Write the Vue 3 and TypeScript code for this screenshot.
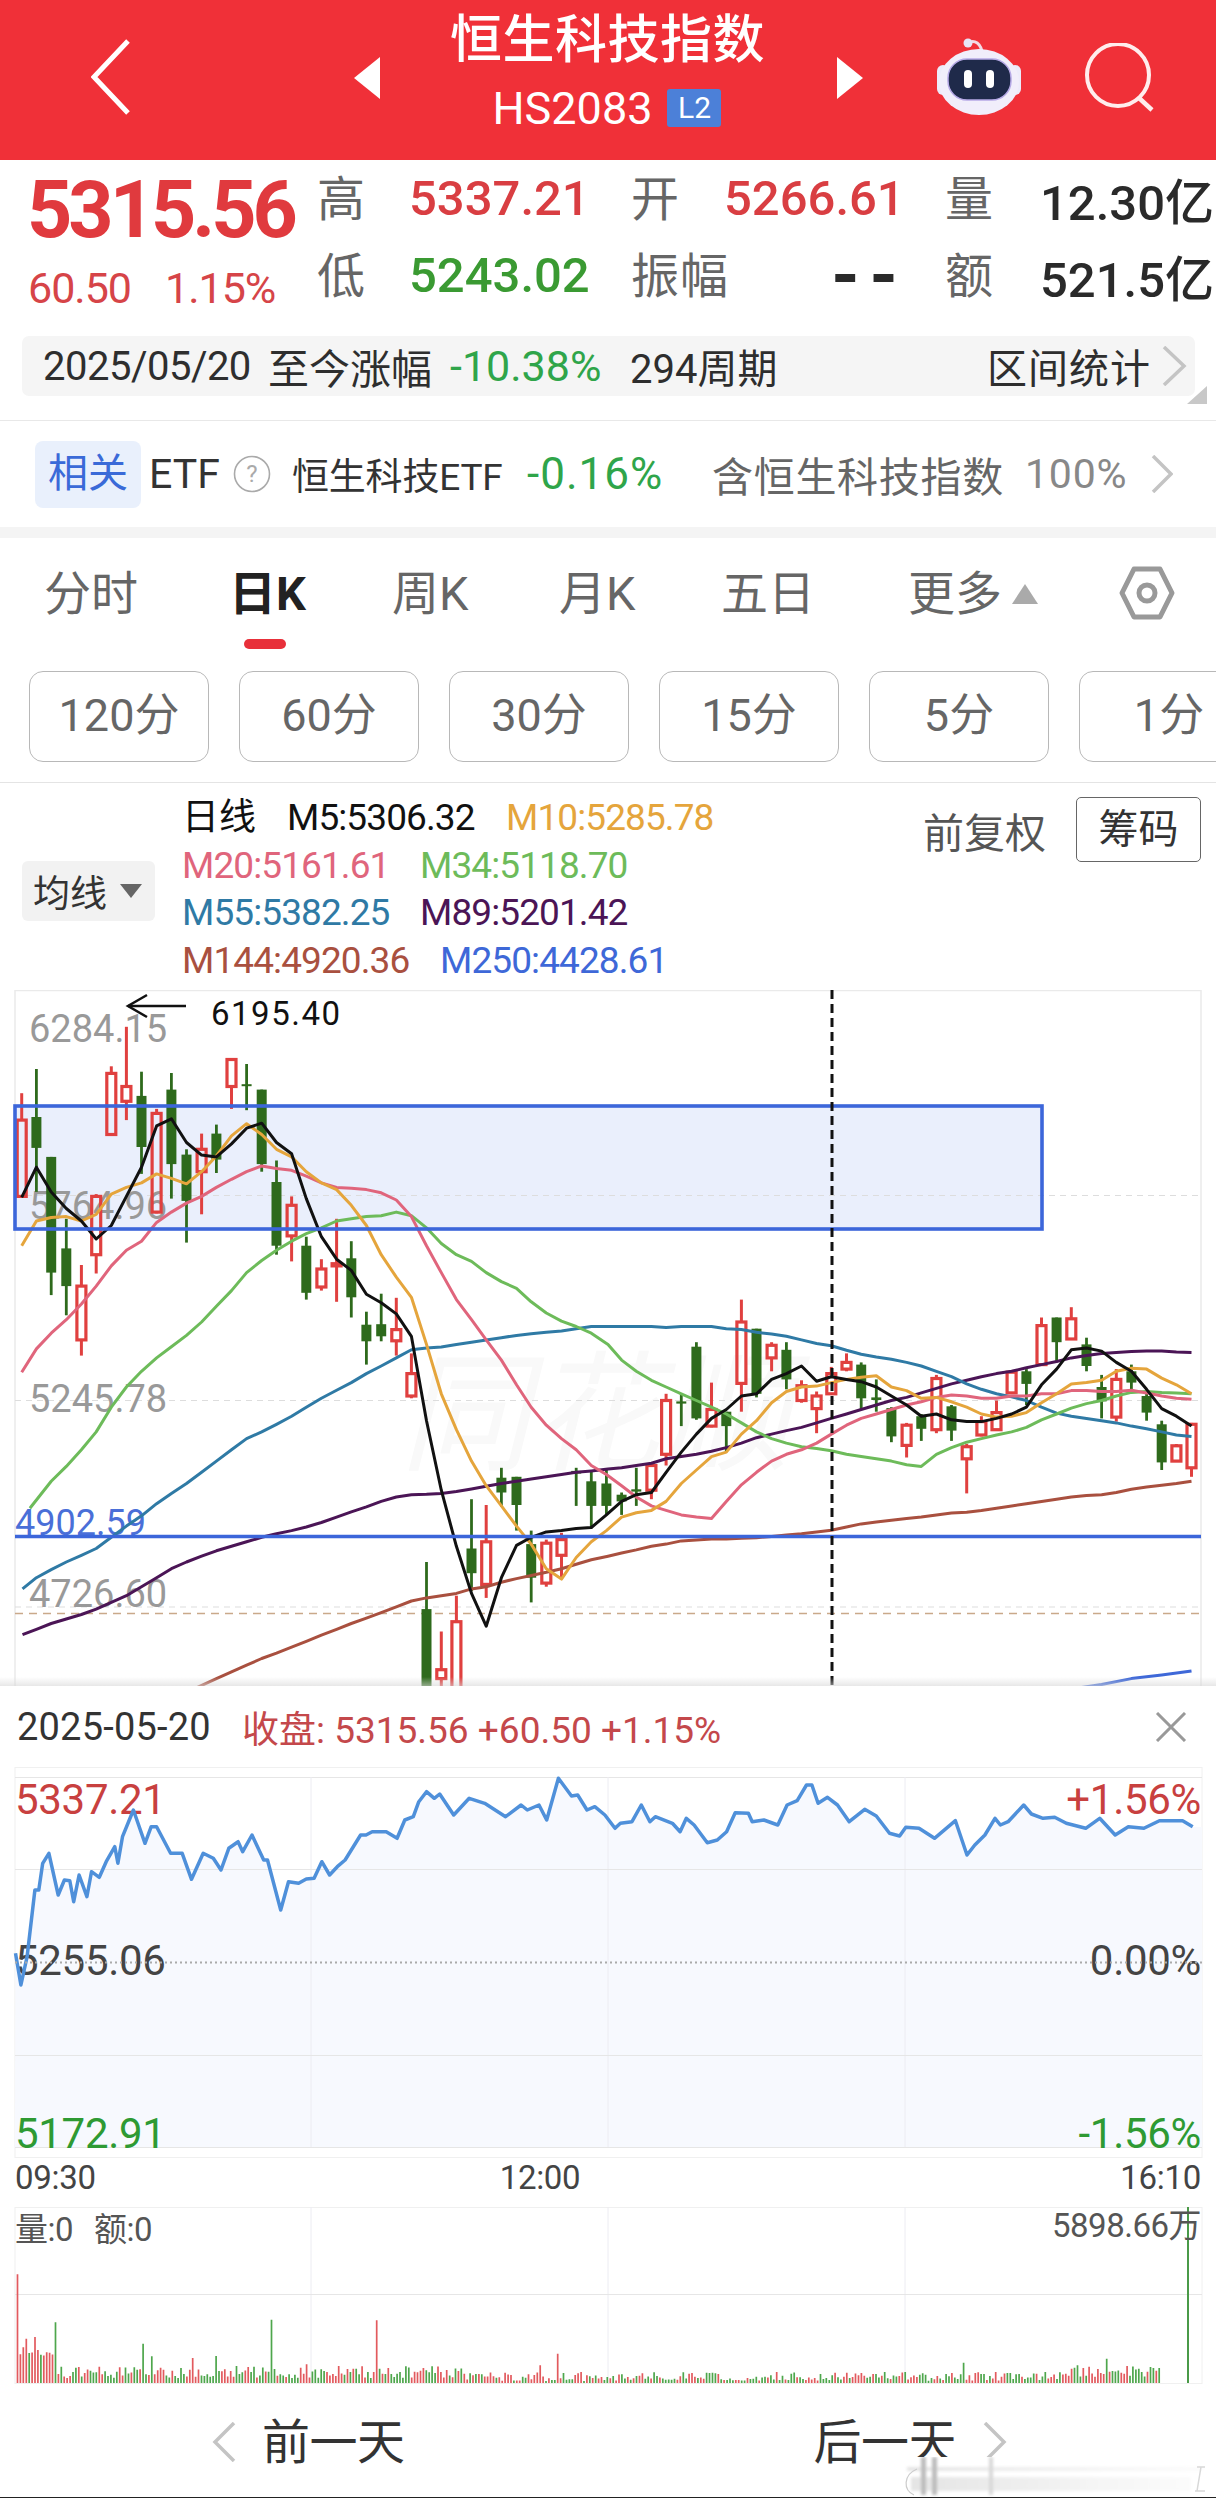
<script setup lang="ts">
type Candle = [number, number, number, number, number, 'r' | 'g']
const XR = 2.579
const YR = 2.229

const left: Candle[] = [
  [56,230,290,460,460,'r'],[94,176,283,352,450,'g'],[132,372,372,630,680,'g'],[171,510,576,660,725,'g'],
  [210,613,660,780,815,'r'],[248,455,460,590,632,'r'],[287,170,186,322,322,'r'],[326,82,215,248,290,'r'],
  [365,182,236,350,410,'g'],[404,265,275,495,498,'r'],[442,185,222,388,465,'g'],[481,355,367,470,563,'g'],
  [520,320,355,405,500,'r'],[558,300,320,378,408,'g'],[597,155,155,215,265,'r'],[636,165,210,214,268,'g'],
  [675,222,222,388,405,'g'],[713,380,428,570,590,'g'],[752,460,480,548,605,'r'],[790,550,570,675,690,'g'],
  [829,600,622,662,670,'r'],[868,510,610,615,695,'r'],[906,560,598,685,730,'g'],[945,717,746,783,835,'g'],
  [983,677,745,772,783,'g'],[1022,686,757,782,815,'r'],[1061,810,855,905,910,'r'],[1100,1275,1380,1600,1600,'g'],
  [1138,1430,1515,1535,1600,'r'],[1177,1350,1408,1600,1600,'r'],[1216,1135,1245,1300,1340,'g'],
  [1254,1148,1230,1325,1355,'r'],[1293,1065,1087,1120,1152,'g'],[1332,1085,1085,1148,1205,'g'],
  [1370,1205,1235,1310,1365,'g'],[1409,1225,1233,1322,1330,'r'],[1448,1210,1225,1260,1310,'r'],
  [1486,1065,1072,1078,1150,'g'],[1525,1070,1095,1150,1200,'g'],[1564,1070,1100,1150,1170,'g'],
]
const right: Candle[] = [
  [35,1120,1125,1140,1170,'g'],[73,1065,1113,1118,1150,'g'],[112,1055,1060,1115,1135,'r'],[150,900,915,1035,1060,'r'],
  [189,900,917,922,972,'g'],[228,785,795,955,958,'g'],[267,875,935,972,975,'r'],[305,940,940,972,1030,'g'],
  [344,690,740,877,940,'r'],[383,755,755,900,908,'g'],[422,785,792,820,850,'r'],[460,785,802,868,890,'g'],
  [499,870,882,915,920,'r'],[538,895,905,933,988,'r'],[576,840,855,900,900,'r'],[615,810,830,845,850,'r'],
  [653,830,835,910,935,'g'],[692,868,908,914,940,'g'],[731,930,932,995,1008,'g'],[770,965,970,1015,1042,'r'],
  [808,945,950,978,1005,'g'],[847,858,866,980,988,'r'],[886,925,928,982,1005,'g'],[925,1012,1018,1045,1122,'r'],
  [963,950,962,992,995,'r'],[1002,915,942,980,982,'r'],[1041,850,852,898,900,'r'],[1079,845,850,878,925,'g'],
  [1118,730,748,835,835,'r'],[1157,730,730,785,830,'g'],[1195,707,733,778,780,'r'],[1234,775,790,838,850,'g'],
  [1273,858,885,917,955,'g'],[1311,845,868,952,962,'r'],[1350,835,850,875,895,'g'],[1389,895,905,942,960,'g'],
  [1428,960,968,1053,1070,'g'],[1466,1012,1016,1050,1052,'r'],[1505,965,968,1065,1085,'r'],
]
const round = (n: number) => Math.round(n * 10) / 10
const candles = [...left, ...right.map((c) => [c[0] + 1568, c[1], c[2], c[3], c[4], c[5]] as Candle)].map((c) => ({
  x: round(c[0] / XR), hi: round(c[1] / YR), top: round(c[2] / YR), bot: round(c[3] / YR), lo: round(c[4] / YR), red: c[5] === 'r',
}))

function line(a: number[], b: number[] = []): string {
  const out: string[] = []
  for (let i = 0; i < a.length; i += 2) out.push(`${round(a[i] / XR)},${round(a[i + 1] / YR)}`)
  for (let i = 0; i < b.length; i += 2) out.push(`${round((b[i] + 1568) / XR)},${round(b[i + 1] / YR)}`)
  return out.join(' ')
}

const maLines = [
  { cls: 'ma144', pts: line(
    [500,1558,558,1535,597,1520,636,1505,675,1490,713,1478,752,1465,790,1452,829,1438,868,1425,906,1412,945,1400,983,1388,1022,1375,1061,1362,1100,1355,1138,1350,1177,1345,1216,1335,1254,1330,1293,1320,1332,1312,1370,1305,1409,1298,1448,1290,1486,1280,1525,1270],
    [0,1262,35,1255,73,1248,112,1240,150,1235,189,1228,228,1226,267,1224,305,1224,344,1222,383,1221,422,1218,460,1215,499,1212,538,1208,576,1204,615,1197,653,1190,692,1186,731,1182,770,1178,808,1175,847,1170,886,1166,925,1164,963,1160,1002,1155,1041,1150,1079,1145,1118,1140,1157,1135,1195,1130,1234,1127,1273,1125,1311,1120,1350,1113,1389,1108,1428,1104,1466,1100,1505,1095]) },
  { cls: 'ma250', pts: line([], [1195,1558,1273,1548,1350,1535,1428,1527,1505,1518]) },
  { cls: 'ma89', pts: line(
    [58,1437,94,1425,132,1412,171,1402,210,1392,248,1380,287,1365,326,1350,365,1330,404,1310,442,1290,481,1275,520,1262,558,1250,597,1240,636,1230,675,1220,713,1212,752,1205,790,1197,829,1187,868,1175,906,1163,945,1152,983,1140,1022,1130,1061,1125,1100,1124,1138,1122,1177,1118,1216,1112,1254,1106,1293,1100,1332,1095,1370,1090,1409,1085,1448,1080,1486,1075,1525,1072],
    [0,1068,35,1065,73,1060,112,1055,150,1045,189,1040,228,1035,267,1028,305,1020,344,1010,383,998,422,990,460,982,499,975,538,965,576,955,615,945,653,935,692,925,731,915,770,908,808,898,847,888,886,878,925,870,963,862,1002,855,1041,850,1079,842,1118,835,1157,828,1195,820,1234,815,1273,810,1311,808,1350,806,1389,805,1428,805,1466,807,1505,808]) },
  { cls: 'ma55', pts: line(
    [58,1335,94,1310,132,1292,171,1275,210,1260,248,1245,287,1220,326,1195,365,1172,404,1145,442,1122,481,1100,520,1075,558,1050,597,1025,636,1000,675,985,713,968,752,950,790,930,829,910,868,892,906,875,945,855,983,838,1022,820,1061,802,1100,798,1138,796,1177,790,1216,785,1254,780,1293,775,1332,770,1370,766,1409,763,1448,760,1486,755,1525,750],
    [0,750,35,750,73,750,112,750,150,752,189,750,228,750,267,750,305,755,344,757,383,763,422,767,460,772,499,780,538,788,576,793,615,803,653,812,692,818,731,823,770,830,808,838,847,850,886,862,925,878,963,890,1002,900,1041,907,1079,915,1118,930,1157,943,1195,950,1234,955,1273,960,1311,965,1350,972,1389,978,1428,985,1466,992,1505,995]) },
  { cls: 'ma34', pts: line(
    [77,1155,132,1095,171,1062,210,1025,248,985,287,930,326,885,365,850,404,820,442,795,481,770,520,740,558,705,597,670,636,630,675,603,713,580,752,560,790,543,829,530,868,515,906,510,945,505,983,503,1022,495,1061,503,1100,530,1138,565,1177,590,1216,605,1254,630,1293,650,1332,665,1370,695,1409,720,1448,738,1486,750,1525,765],
    [0,790,35,825,73,850,112,870,150,885,189,900,228,915,267,930,305,945,344,965,383,985,422,1000,460,1010,499,1018,538,1022,576,1027,615,1035,653,1040,692,1045,731,1050,770,1058,808,1062,847,1035,886,1020,925,1008,963,1000,1002,992,1041,985,1079,975,1118,958,1157,945,1195,932,1234,922,1273,915,1311,905,1350,897,1389,895,1428,897,1466,898,1505,900]) },
  { cls: 'ma20', pts: line(
    [56,852,94,800,132,765,171,735,210,700,248,660,287,615,326,580,365,560,404,518,442,495,481,475,520,460,558,440,597,422,636,405,675,392,713,398,752,402,790,415,829,430,868,440,906,442,945,445,983,452,1022,468,1061,505,1100,570,1138,630,1177,690,1216,735,1254,780,1293,825,1332,880,1370,930,1409,970,1448,1000,1486,1025,1525,1060,1564,1080],
    [35,1105,73,1130,112,1150,150,1160,189,1170,228,1175,267,1178,305,1140,344,1103,383,1075,422,1050,460,1035,499,1025,538,1010,576,990,615,970,653,955,692,945,731,935,770,925,808,918,847,908,886,903,925,905,963,910,1002,910,1041,905,1079,905,1118,900,1157,900,1195,893,1234,893,1273,895,1311,895,1350,892,1389,898,1428,905,1466,910,1505,912]) },
  { cls: 'ma10', pts: line(
    [56,570,94,515,132,507,171,505,210,515,248,500,287,455,326,440,365,430,404,410,442,420,481,432,520,405,558,370,597,325,636,298,675,322,713,355,752,372,790,405,829,430,868,445,906,480,945,525,983,590,1022,640,1061,685,1100,790,1138,900,1177,980,1216,1050,1254,1105,1293,1150,1332,1195,1370,1235,1409,1290,1448,1313,1486,1265,1525,1230,1564,1205],
    [35,1175,73,1165,112,1160,150,1140,189,1100,228,1070,267,1040,305,1030,344,990,383,960,422,920,460,895,499,885,538,883,576,875,615,868,653,863,692,860,731,885,770,893,808,910,847,908,886,918,925,930,963,945,1002,952,1041,950,1079,942,1118,920,1157,900,1195,878,1234,875,1273,870,1311,850,1350,843,1389,845,1428,865,1466,880,1505,900]) },
  { cls: 'ma5', pts: line(
    [56,462,94,395,132,450,171,487,210,515,248,555,287,525,326,460,365,395,404,303,442,287,481,340,520,368,558,372,597,343,636,308,675,297,713,340,752,365,790,465,829,550,868,600,906,625,945,678,983,697,1022,722,1061,772,1100,960,1138,1115,1177,1240,1216,1345,1254,1418,1293,1310,1332,1238,1370,1220,1409,1208,1448,1205,1486,1200,1525,1198,1564,1170],
    [35,1140,73,1125,112,1120,150,1075,189,1030,228,990,267,955,305,935,344,905,383,900,422,868,460,855,499,838,538,872,576,862,615,868,653,873,692,885,731,905,770,925,808,950,847,945,886,958,925,962,963,962,1002,955,1041,945,1079,930,1118,880,1157,845,1195,802,1234,798,1273,805,1311,830,1350,850,1389,890,1428,933,1466,950,1505,972]) },
]

const priceRaw = [20,790,27,885,35,800,45,600,50,600,55,520,63,490,75,615,83,570,90,572,95,635,102,555,112,620,118,545,128,562,137,515,148,470,152,520,158,440,172,360,187,460,195,410,202,410,220,490,235,490,247,568,262,490,275,505,285,540,295,475,307,455,313,485,325,435,340,510,345,510,362,660,372,575,385,580,395,567,405,565,415,515,425,555,435,530,445,510,465,435,472,435,480,425,498,425,512,445,522,390,533,380,540,335,550,305,560,325,567,312,585,375,605,325,625,340,652,380,672,345,680,360,695,345,705,390,720,265,737,318,745,315,757,360,767,350,780,375,793,415,800,400,815,395,827,345,838,395,845,380,867,400,877,425,885,385,895,405,912,458,925,450,937,425,948,368,965,370,970,395,985,390,1003,405,1015,345,1028,332,1040,285,1047,285,1055,340,1067,322,1080,345,1095,395,1115,358,1130,378,1147,430,1160,438,1168,412,1185,415,1205,445,1232,392,1247,495,1257,465,1270,435,1283,385,1290,405,1300,395,1320,345,1330,372,1345,385,1360,382,1375,400,1400,415,1418,385,1438,435,1455,410,1475,415,1495,392,1525,392,1538,410]
const pricePts: string[] = []
for (let i = 0; i < priceRaw.length; i += 2) pricePts.push(`${round(priceRaw[i] / 1.2895)},${round(priceRaw[i + 1] / 3 - 77)}`)
const priceLine = pricePts.join(' ')
const priceArea = `15,380 ${priceLine} 1202,60 1202,380`

const spikes: [number, number, 'r' | 'g'][] = [[23,432,'r'],[32,625,'r'],[45,620,'r'],[72,576,'g'],[183,640,'g'],[196,678,'g'],[250,683,'r'],[280,677,'g'],[352,568,'g'],[396,702,'r'],[486,570,'r'],[695,705,'r'],[718,670,'r'],[1242,697,'g'],[1428,685,'g']]
let seed = 17
const rnd = () => { seed = (seed * 16807) % 2147483647; return (seed % 1000) / 1000 }
const volRed: string[] = []
const volGreen: string[] = []
for (let i = 0; i < 392; i++) {
  const x = 17.5 + i * 2.92
  const zx = x * 1.2895
  let h = zx < 75 ? 22 + rnd() * 14 : zx < 600 ? 5 + rnd() * 12 : zx < 1380 ? 2 + rnd() * 9 : 6 + rnd() * 12
  let red = rnd() > 0.5
  for (const s of spikes) {
    if (Math.abs(s[0] - zx) < 1.9) { h = (758 - s[1]) / 3; red = s[2] === 'r' }
  }
  const seg = `M${round(x)} 176V${round(176 - h)}`
  if (red) volRed.push(seg)
  else volGreen.push(seg)
}
const volRedPath = volRed.join('')
const volGreenPath = volGreen.join('')

const grid = [311, 608, 905]
const intervals = ['120分', '60分', '30分', '15分', '5分', '1分']
</script>

<template>
  <div class="page">
    <header class="hero">
      <div class="back">
        <svg width="40" height="76" viewBox="0 0 40 76"><polyline points="37,2 3,38 37,74" class="hero-stroke" /></svg>
      </div>
      <svg class="tri" width="28" height="42" viewBox="0 0 28 42"><polygon points="27,0 27,42 1,21" fill="#fff" /></svg>
      <div class="hero-title">
        <div class="name">恒生科技指数</div>
        <div class="code"><span>HS2083</span><b class="l2">L2</b></div>
      </div>
      <svg class="tri" width="28" height="42" viewBox="0 0 28 42"><polygon points="1,0 1,42 27,21" fill="#fff" /></svg>
      <svg class="robot" width="84" height="78" viewBox="0 0 84 78">
        <path d="M31 6 C34 2 42 2 45 13" fill="none" stroke="#f3d9e4" stroke-width="3" />
        <circle cx="31" cy="5" r="4.5" fill="#e8e4f6" />
        <rect x="0" y="27" width="12" height="30" rx="6" fill="#ecebfa" />
        <rect x="72" y="27" width="12" height="30" rx="6" fill="#ecebfa" />
        <ellipse cx="42" cy="44" rx="40" ry="33" fill="#f1eefb" />
        <rect x="11" y="21" width="63" height="41" rx="19" fill="#1f2a4a" stroke="#b6a9e6" stroke-width="1.5" />
        <rect x="27" y="32" width="8" height="18" rx="4" fill="#fff" />
        <rect x="49" y="32" width="8" height="18" rx="4" fill="#fff" />
      </svg>
      <svg class="search" width="70" height="70" viewBox="0 0 70 70">
        <circle cx="33" cy="32" r="31" fill="none" stroke="#ffeded" stroke-width="4" />
        <line x1="54" y1="55" x2="67" y2="67" stroke="#ffeded" stroke-width="4.5" />
      </svg>
    </header>

    <section class="quote">
      <div class="quote-left">
        <div class="price">5315.56</div>
        <div class="change"><span>60.50</span><span>1.15%</span></div>
      </div>
      <div class="quote-grid">
        <span class="lab">高</span><span class="val up">5337.21</span>
        <span class="lab">开</span><span class="val up">5266.61</span>
        <span class="lab">量</span><span class="val dark">12.30亿</span>
        <span class="lab">低</span><span class="val down">5243.02</span>
        <span class="lab">振幅</span><span class="val dark dash">--</span>
        <span class="lab">额</span><span class="val dark">521.5亿</span>
      </div>
    </section>

    <section class="range-wrap">
      <div class="range">
        <span class="r-date">2025/05/20</span>
        <span class="r-since">至今涨幅</span>
        <span class="r-pct">-10.38%</span>
        <span class="r-cycle">294周期</span>
        <span class="r-stat">区间统计</span>
        <svg width="26" height="40" viewBox="0 0 26 40"><polyline points="3,1 23,20 3,39" class="chev" /></svg>
      </div>
      <svg class="corner" width="20" height="18" viewBox="0 0 20 18"><polygon points="20,0 20,18 0,18" fill="#c8c8c8" /></svg>
    </section>

    <section class="related">
      <span class="rel-tag">相关</span>
      <span class="rel-etf">ETF</span>
      <svg class="rel-q" width="38" height="38" viewBox="0 0 38 38"><circle cx="19" cy="19" r="17.5" fill="none" stroke="#aaa" stroke-width="1.6" /><text x="19" y="27" text-anchor="middle" class="rel-q-t">?</text></svg>
      <span class="rel-name">恒生科技ETF</span>
      <span class="rel-pct">-0.16%</span>
      <span class="rel-inc">含恒生科技指数</span>
      <span class="rel-hund">100%</span>
      <svg class="rel-chev" width="22" height="38" viewBox="0 0 22 38"><polyline points="2,1 20,19 2,37" class="chev" /></svg>
    </section>
    <div class="band"></div>

    <nav class="tabs">
      <span class="tab">分时</span>
      <span class="tab active">日K</span>
      <span class="tab">周K</span>
      <span class="tab">月K</span>
      <span class="tab">五日</span>
      <span class="tab more">更多<svg width="26" height="20" viewBox="0 0 26 20"><polygon points="13,0 26,20 0,20" fill="#aaa" /></svg></span>
      <svg width="56" height="54" viewBox="0 0 56 54"><polygon points="15,3 41,3 53,27 41,51 15,51 3,27" fill="none" stroke="#999" stroke-width="5" stroke-linejoin="round" /><circle cx="28" cy="27" r="8" fill="none" stroke="#999" stroke-width="5" /></svg>
    </nav>

    <div class="intervals">
      <div v-for="t in intervals" :key="t" class="ivl">{{ t }}</div>
    </div>

    <section class="legend">
      <div class="ma-pick">均线<svg width="22" height="14" viewBox="0 0 22 14"><polygon points="0,0 22,0 11,14" fill="#666" /></svg></div>
      <div class="ma-rows">
        <div class="ma-row"><span class="day">日线</span><span class="c5 gap-1">M5:5306.32</span><span class="c10 gap-2">M10:5285.78</span></div>
        <div class="ma-row"><span class="c20 col1">M20:5161.61</span><span class="c34">M34:5118.70</span></div>
        <div class="ma-row"><span class="c55 col1">M55:5382.25</span><span class="c89">M89:5201.42</span></div>
        <div class="ma-row"><span class="c144 col1b">M144:4920.36</span><span class="c250">M250:4428.61</span></div>
      </div>
      <span class="fq">前复权</span>
      <span class="chip">筹码</span>
    </section>

    <section class="kline">
      <svg width="1216" height="696" viewBox="0 0 1216 696">
        <text x="400" y="470" class="mark">同花顺</text>
        <rect x="15" y="116" width="1027" height="123" class="zone" />
        <line x1="15" y1="0.5" x2="1201" y2="0.5" class="frame" />
        <line x1="15" y1="0" x2="15" y2="696" class="frame" />
        <line x1="1201" y1="0" x2="1201" y2="696" class="frame" />
        <line x1="15" y1="205.5" x2="1201" y2="205.5" class="dash-g" />
        <line x1="15" y1="410.5" x2="1201" y2="410.5" class="dash-g" />
        <line x1="15" y1="617" x2="1201" y2="617" class="dash-g" />
        <line x1="15" y1="623.5" x2="1201" y2="623.5" class="dash-b" />
        <text x="29" y="52" class="axis">6284.15</text>
        <text x="29" y="229" class="axis">5764.96</text>
        <text x="29" y="422" class="axis">5245.78</text>
        <text x="29" y="617" class="axis">4726.60</text>
        <text x="15" y="545" class="axis blue">4902.59</text>
        <g v-for="(c, i) in candles" :key="i">
          <template v-if="c.red">
            <line :x1="c.x" :y1="c.hi" :x2="c.x" :y2="c.top" class="wick-r" />
            <line :x1="c.x" :y1="c.bot" :x2="c.x" :y2="c.lo" class="wick-r" />
            <rect :x="c.x - 4.5" :y="c.top" width="9" :height="c.bot - c.top" class="body-r" />
          </template>
          <template v-else>
            <line :x1="c.x" :y1="c.hi" :x2="c.x" :y2="c.lo" class="wick-g" />
            <rect :x="c.x - 5" :y="c.top" width="10" :height="Math.max(c.bot - c.top, 2)" class="body-g" />
          </template>
        </g>
        <polyline v-for="m in maLines" :key="m.cls" :points="m.pts" class="ma" :class="m.cls" />
        <rect x="15" y="116" width="1027" height="123" class="zone-edge" />
        <line x1="15" y1="546.5" x2="1201" y2="546.5" class="hline" />
        <line x1="832" y1="0" x2="832" y2="696" class="cross" />
        <line x1="186" y1="16" x2="128" y2="16" class="arrow" />
        <polyline points="147,5 128,16 147,27" class="arrow" />
        <text x="211" y="35" class="anno">6195.40</text>
      </svg>
      <div class="fade"></div>
    </section>

    <section class="detail">
      <div class="detail-head">
        <span class="d-date">2025-05-20</span>
        <span class="d-close">收盘: 5315.56 +60.50 +1.15%</span>
        <svg class="d-x" width="32" height="30" viewBox="0 0 32 30"><path d="M2 1L30 29M30 1L2 29" stroke="#999" stroke-width="3" fill="none" /></svg>
      </div>
      <svg class="d-chart" width="1216" height="392" viewBox="0 0 1216 392">
        <rect x="15" y="0.5" width="1187" height="390" class="d-frame" />
        <line x1="15" y1="10.5" x2="1202" y2="10.5" class="d-strong" />
        <polygon :points="priceArea" class="d-area" />
        <line v-for="g in grid" :key="g" :x1="g" :y1="10" :x2="g" y2="380" class="d-grid" />
        <line x1="15" y1="102.5" x2="1202" y2="102.5" class="d-strong" />
        <line x1="15" y1="288.5" x2="1202" y2="288.5" class="d-strong" />
        <line x1="15" y1="380.5" x2="1202" y2="380.5" class="d-strong" />
        <text x="15" y="47" class="d-lab red">5337.21</text>
        <text x="1201" y="47" text-anchor="end" class="d-lab red">+1.56%</text>
        <text x="15" y="208" class="d-lab dark">5255.06</text>
        <text x="1201" y="208" text-anchor="end" class="d-lab dark">0.00%</text>
        <text x="15" y="381" class="d-lab green">5172.91</text>
        <text x="1201" y="381" text-anchor="end" class="d-lab green">-1.56%</text>
        <polyline :points="priceLine" class="d-price" />
        <line x1="15" y1="195.5" x2="1202" y2="195.5" class="d-dots" />
      </svg>
      <div class="times"><span>09:30</span><span class="t-mid">12:00</span><span class="t-end">16:10</span></div>
      <svg class="v-chart" width="1216" height="178" viewBox="0 0 1216 178">
        <rect x="15" y="0.5" width="1187" height="176" class="d-frame" />
        <line v-for="g in grid" :key="g" :x1="g" y1="0" :x2="g" y2="176" class="d-grid" />
        <line x1="15" y1="87.5" x2="1202" y2="87.5" class="d-strong" />
        <path :d="volGreenPath" class="vol-g" />
        <path :d="volRedPath" class="vol-r" />
        <line x1="1188" y1="0" x2="1188" y2="176" class="vol-last" />
        <text x="15" y="34" class="v-lab">量:0</text>
        <text x="94" y="34" class="v-lab">额:0</text>
        <text x="1201" y="30" text-anchor="end" class="v-lab">5898.66万</text>
      </svg>
    </section>

    <footer class="foot">
      <svg width="24" height="40" viewBox="0 0 24 40"><polyline points="22,1 3,20 22,39" class="chev" /></svg>
      <span class="foot-t">前一天</span>
      <span class="foot-t second">后一天</span>
      <svg width="24" height="40" viewBox="0 0 24 40"><polyline points="2,1 21,20 2,39" class="chev" /></svg>
      <svg class="smear" width="310" height="44" viewBox="0 0 310 44">
        <defs>
          <filter id="b"><feGaussianBlur stdDeviation="1.6" /></filter>
          <linearGradient id="sg" x1="0" x2="1" y1="0" y2="0"><stop offset="0" stop-color="#e4e4e4" /><stop offset="0.7" stop-color="#f6f6f6" /><stop offset="1" stop-color="#fbfbfb" /></linearGradient>
        </defs>
        <rect x="0" y="0" width="310" height="36" fill="#fff" />
        <g filter="url(#b)">
          <rect x="6" y="10" width="296" height="4" fill="url(#sg)" />
          <rect x="10" y="20" width="280" height="14" fill="url(#sg)" />
          <rect x="20" y="0" width="5" height="38" fill="#bcbcbc" />
          <rect x="31" y="0" width="5" height="38" fill="#bcbcbc" />
          <rect x="88" y="0" width="4" height="38" fill="#d8d8d8" />
        </g>
        <path d="M16 12 C2 18 2 33 13 38" fill="none" stroke="#ccc" stroke-width="1.2" />
        <path d="M296 10 H304 M300 10 L296 34 M294 34 H304" fill="none" stroke="#d8d8d8" stroke-width="1.5" />
      </svg>
    </footer>
  </div>
</template>

<style>
html, body { margin: 0; background: #fff; }
</style>

<style scoped>
.page {
  position: relative;
  width: 1216px;
  height: 2498px;
  overflow: hidden;
  background: #fff;
  font-family: Roboto, "Noto Sans CJK SC", sans-serif;
  color: #333;
}
svg { display: block; flex: none; }
.hero {
  height: 160px;
  background: #f03038;
  display: flex;
  align-items: center;
}
.back { width: 353px; padding-left: 91px; box-sizing: border-box; margin-top: -6px; }
.hero-stroke { fill: none; stroke: #fff; stroke-width: 5; }
.tri { margin-top: -4px; }
.hero-title { width: 455px; height: 160px; box-sizing: border-box; padding-top: 10px; text-align: center; color: #fff; }
.name { font-size: 52px; line-height: 62px; font-weight: 500; letter-spacing: 0.5px; margin-left: -2px; }
.code { display: flex; justify-content: center; align-items: center; gap: 15px; margin-top: 16px; height: 40px; font-size: 45px; letter-spacing: 0; margin-left: -3px; }
.l2 { width: 54px; height: 38px; background: #4c80d8; border-radius: 3px; font-size: 30px; line-height: 38px; font-weight: 400; letter-spacing: 0; }
.robot { margin-left: 73px; margin-top: -6px; }
.search { margin-left: 64px; margin-top: -4px; }

.quote { display: flex; height: 176px; }
.quote-left { width: 318px; box-sizing: border-box; padding-left: 29px; }
.price { font-size: 79px; line-height: 76px; margin: 12px 0 0 -2px; font-weight: 700; color: #e03a3e; letter-spacing: -4px; }
.change { display: flex; gap: 34px; margin-top: 20px; font-size: 43px; line-height: 40px; color: #d64448; letter-spacing: -1px; margin-left: -1px; }
.quote-grid {
  display: grid;
  grid-template-columns: 92px 222px 93px 221px 90px 178px;
  grid-auto-rows: 77px;
  align-items: center;
}
.lab { font-size: 48px; color: #666; white-space: nowrap; letter-spacing: 1px; margin: -8px 0 0 -1px; }
.val { font-size: 49px; font-weight: 500; letter-spacing: 0; white-space: nowrap; margin-left: -1px; }
.up { color: #d93e42; }
.down { color: #3a9a32; }
.dark { color: #2a2a2a; text-align: right; }
.dash { padding-right: 38px; font-size: 72px; letter-spacing: 10px; font-weight: 700; line-height: 60px; }

.range-wrap { position: relative; height: 84px; border-bottom: 1px solid #e8e8e8; box-sizing: content-box; }
.range {
  margin-left: 22px;
  width: 1173px;
  height: 60px;
  box-sizing: border-box;
  padding: 0 8px 0 21px;
  display: flex;
  align-items: center;
  background: #f5f5f5;
  border-radius: 7px;
  font-size: 40px;
  color: #2e2e2e;
}
.r-date { width: 225px; letter-spacing: -0.5px; white-space: nowrap; }
.r-since { width: 182px; font-size: 41px; white-space: nowrap; }
.r-pct { width: 180px; font-size: 43px; color: #2fa54a; white-space: nowrap; }
.r-cycle { white-space: nowrap; }
.r-stat { margin-left: auto; margin-right: 10px; font-size: 40px; letter-spacing: 1px; }
.chev { fill: none; stroke: #c4c4c4; stroke-width: 3.5; }
.corner { position: absolute; left: 1187px; top: 50px; }

.related { height: 106px; display: flex; align-items: center; padding-left: 35px; white-space: nowrap; }
.rel-tag { width: 106px; height: 67px; line-height: 65px; text-align: center; background: #e9f0fc; color: #3a6ad8; border-radius: 8px; font-size: 40px; }
.rel-etf { margin-left: 8px; width: 75px; font-size: 41px; color: #333; }
.rel-q { margin-left: 9px; }
.rel-q-t { font-size: 24px; fill: #aaa; font-family: Roboto, sans-serif; }
.rel-name { margin-left: 21px; width: 212px; font-size: 37px; color: #333; letter-spacing: -0.2px; }
.rel-pct { margin-left: 23px; width: 140px; font-size: 44px; color: #2fa54a; letter-spacing: 1px; }
.rel-inc { margin-left: 45px; width: 291px; font-size: 41px; color: #666; letter-spacing: 0.7px; }
.rel-hund { margin-left: 22px; width: 102px; font-size: 41px; color: #888; letter-spacing: 0.8px; }
.rel-chev { margin-left: 24px; }
.band { height: 11px; background: #f4f4f4; }

.tabs {
  height: 133px;
  box-sizing: border-box;
  padding: 28px 0 0 44px;
  display: grid;
  grid-template-columns: 185px 163px 167px 162px 187px 211px 56px;
  align-items: start;
  font-size: 47px;
  line-height: 56px;
  color: #666;
}
.tab { position: relative; white-space: nowrap; }
.tab.active { font-weight: 700; color: #222; }
.tab.active::after {
  content: "";
  position: absolute;
  left: 15px;
  top: 73px;
  width: 42px;
  height: 10px;
  border-radius: 5px;
  background: #e8303a;
}
.more { display: flex; align-items: center; gap: 10px; }
.intervals { display: flex; gap: 30px; height: 112px; box-sizing: border-box; padding-left: 29px; border-bottom: 1px solid #e4e4e4; overflow: hidden; }
.ivl { flex: none; width: 180px; height: 91px; box-sizing: border-box; border: 1px solid #b8b8b8; border-radius: 14px; text-align: center; line-height: 87px; font-size: 45px; color: #666; }

.legend { position: relative; height: 207px; display: flex; align-items: flex-start; }
.ma-pick {
  margin: 78px 0 0 22px;
  width: 133px;
  height: 60px;
  box-sizing: border-box;
  padding: 0 13px 0 11px;
  background: #f2f2f2;
  border-radius: 6px;
  display: flex;
  align-items: center;
  justify-content: space-between;
  font-size: 37px;
  color: #333;
}
.ma-rows { margin: 11px 0 0 27px; width: 600px; font-size: 37px; letter-spacing: -0.9px; }
.ma-row { height: 47.5px; line-height: 47.5px; display: flex; white-space: nowrap; }
.day { color: #111; width: 105px; letter-spacing: 0; }
.gap-1 { width: 219px; }
.col1 { width: 238px; }
.col1b { width: 258px; }
.c5 { color: #111; }
.c10 { color: #e5a53c; }
.c20 { color: #e0657c; }
.c34 { color: #6dbb5a; }
.c55 { color: #2f7aa5; }
.c89 { color: #4b1556; }
.c144 { color: #a9503f; }
.c250 { color: #3e68d8; }
.fq { margin: 26px 0 0 141px; font-size: 41px; line-height: 50px; color: #555; white-space: nowrap; }
.chip { margin: 14px 0 0 30px; width: 125px; height: 65px; box-sizing: border-box; border: 1px solid #666; border-radius: 5px; font-size: 40px; line-height: 63px; text-align: center; color: #333; }

.kline { position: relative; height: 696px; }
.mark { font-size: 130px; font-style: italic; fill: #f9f9f9; }
.zone { fill: #eaeffc; }
.zone-edge { fill: none; stroke: #3c66da; stroke-width: 3.6; }
.frame { stroke: #eaeaea; stroke-width: 1.5; }
.dash-g { stroke: #ddd; stroke-width: 1; stroke-dasharray: 6 5; }
.dash-b { stroke: #c9a98a; stroke-width: 1.5; stroke-dasharray: 8 6; }
.axis { font-size: 38px; fill: #999; }
.axis.blue { font-size: 36px; fill: #4a6fd8; }
.wick-r { stroke: #e0403f; stroke-width: 3; }
.wick-g { stroke: #2e6a1c; stroke-width: 2.8; }
.body-r { fill: none; stroke: #e0403f; stroke-width: 3.2; }
.body-g { fill: #2e6a1c; }
.ma { fill: none; stroke-width: 3; stroke-linejoin: round; }
.ma5 { stroke: #111; }
.ma10 { stroke: #e5a53c; }
.ma20 { stroke: #e0657c; }
.ma34 { stroke: #6dbb5a; }
.ma55 { stroke: #2f7aa5; }
.ma89 { stroke: #4b1556; }
.ma144 { stroke: #a9503f; }
.ma250 { stroke: #3e68d8; }
.hline { stroke: #3c66da; stroke-width: 3.6; }
.cross { stroke: #111; stroke-width: 3; stroke-dasharray: 9 5; }
.arrow { fill: none; stroke: #111; stroke-width: 2.5; }
.anno { font-size: 33px; fill: #111; letter-spacing: 1.5px; }
.fade { position: absolute; left: 0; right: 0; bottom: 0; height: 9px; background: linear-gradient(rgba(220, 220, 220, 0), rgba(215, 215, 215, 0.6)); }

.detail { background: #fff; }
.detail-head { height: 81px; display: flex; align-items: center; box-sizing: border-box; padding: 0 29px 0 17px; font-size: 37px; white-space: nowrap; }
.d-date { width: 195px; font-size: 38px; color: #333; letter-spacing: 0.2px; }
.d-close { margin-left: 30px; color: #c4484b; letter-spacing: 0; }
.d-x { margin-left: auto; }
.d-frame { fill: none; stroke: #f0f0f0; }
.d-strong { stroke: #e6e6e6; stroke-width: 1; }
.d-grid { stroke: #ececf2; stroke-width: 1; }
.d-area { fill: #f7f9fe; }
.d-price { fill: none; stroke: #4f90da; stroke-width: 3.5; stroke-linejoin: round; }
.d-dots { stroke: #aaa; stroke-width: 2; stroke-dasharray: 2 3; }
.d-lab { font-size: 42px; letter-spacing: -0.3px; }
.d-lab.red { fill: #c8403f; }
.d-lab.dark { fill: #444; }
.d-lab.green { fill: #2e9a33; }
.times { height: 48px; display: flex; box-sizing: border-box; padding: 0 15px; font-size: 33px; line-height: 38px; color: #444; letter-spacing: -0.3px; }
.t-mid { margin-left: 404px; }
.t-end { margin-left: auto; }
.vol-r { stroke: #e25a5e; stroke-width: 1.7; fill: none; }
.vol-g { stroke: #4ea64c; stroke-width: 1.7; fill: none; }
.vol-last { stroke: #4a9a48; stroke-width: 2; }
.v-lab { font-size: 33px; fill: #555; letter-spacing: -0.5px; }

.foot { position: relative; height: 113px; box-sizing: border-box; padding: 37px 0 0 212px; display: flex; align-items: flex-start; border-bottom: 1px solid #222; }
.foot-t { margin: 0 0 0 26px; font-size: 48px; line-height: 42px; color: #333; letter-spacing: -0.5px; }
.foot-t.second { margin-left: 409px; margin-right: 27px; }
.smear { position: absolute; left: 901px; top: 72px; }
</style>
